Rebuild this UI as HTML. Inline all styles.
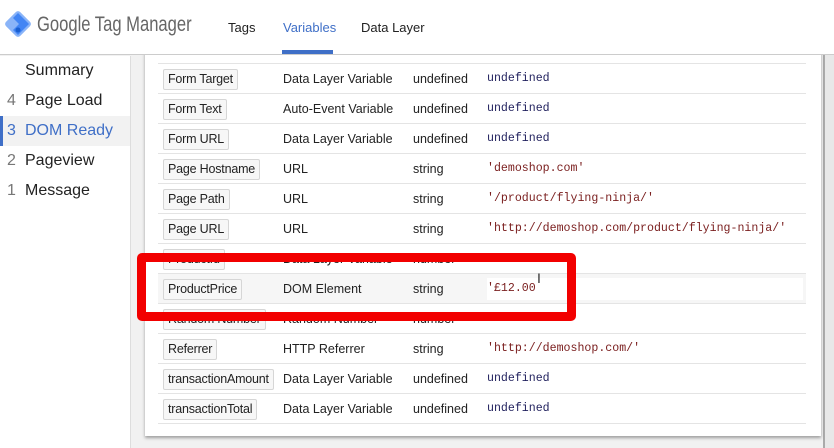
<!DOCTYPE html>
<html><head><style>
*{margin:0;padding:0;box-sizing:border-box}
body{width:834px;height:448px;overflow:hidden;background:#f1f1f1;font-family:"Liberation Sans",Arial,sans-serif;position:relative}
.hdr{position:absolute;left:0;top:0;width:834px;height:55px;background:#fff;border-bottom:1px solid #ccc;z-index:5}
.side{position:absolute;left:0;top:56px;width:131px;height:392px;background:#fff;border-right:1px solid #ddd}
.side div{height:30px;line-height:30px;font-size:16px;color:#222;padding-left:7px;position:relative}
.side span{color:#777;display:inline-block;width:18px}
.side .act{background:#f2f2f2;color:#3f6fc7}
.side .act:before{content:"";position:absolute;left:0;top:0;width:3px;height:30px;background:#3f6fc7}
.card{position:absolute;left:145px;top:31px;width:676px;height:405px;background:#fff;box-shadow:0 2px 3px rgba(0,0,0,.35)}
.row{position:absolute;left:13px;width:648px;height:30px;border-bottom:1px solid #e4e4e4;font-size:12.5px;color:#222;white-space:nowrap}
.row>*{position:absolute;top:0;line-height:30px}
.b{left:5px;top:5px!important;height:21px;line-height:19px!important;padding:0 4px;border:1px solid #d6d6d6;background:#f7f7f7;border-radius:2px;letter-spacing:-0.2px}
.t{left:125px}.d{left:255px}.v{left:329px;font-family:"Liberation Mono",monospace;font-size:11.6px}
.u{color:#1f1f5c}.s{color:#7b2020}
</style></head><body>
<div class="hdr">
<svg style="position:absolute;left:4px;top:10px" width="28" height="28" viewBox="0 0 28 28"><rect x="4" y="4" width="20" height="20" transform="rotate(45 14 14)" rx="3" fill="#8ab4f8"/><path d="M14 3 L25 14 L14 25 L9 20 L15 14 L9 8Z" fill="#4285f4"/><circle cx="14" cy="20" r="2.5" fill="#1a5fd0"/></svg>
<div style="position:absolute;left:37px;top:13px;font-size:21px;color:#666;transform:scaleX(0.79);transform-origin:0 0;white-space:nowrap">Google Tag Manager</div>
<div style="position:absolute;left:228px;top:20px;font-size:13px;color:#222">Tags</div>
<div style="position:absolute;left:283px;top:20px;font-size:13px;color:#3f6fc7">Variables</div>
<div style="position:absolute;left:282px;top:50px;width:51px;height:4px;background:#3f6fc7"></div>
<div style="position:absolute;left:361px;top:20px;font-size:13px;color:#222">Data Layer</div>
</div>
<div class="side">
<div style="padding-left:25px">Summary</div>
<div><span>4</span>Page Load</div>
<div class="act"><span style="color:#3f6fc7">3</span>DOM Ready</div>
<div><span>2</span>Pageview</div>
<div><span>1</span>Message</div>
</div>
<div style="position:absolute;left:823px;top:55px;width:11px;height:393px;background:#e8e8e8;border-left:2px solid #aaa"></div>
<div class="card">
<div class="row" style="top:3px"><div class="b" style="top:-4px!important">&nbsp;&nbsp;&nbsp;&nbsp;&nbsp;&nbsp;&nbsp;&nbsp;&nbsp;&nbsp;&nbsp;&nbsp;&nbsp;</div></div>
<div class="row" style="top:33px"><div class="b">Form Target</div><div class="t">Data Layer Variable</div><div class="d">undefined</div><div class="v u">undefined</div></div>
<div class="row" style="top:63px"><div class="b">Form Text</div><div class="t">Auto-Event Variable</div><div class="d">undefined</div><div class="v u">undefined</div></div>
<div class="row" style="top:93px"><div class="b">Form URL</div><div class="t">Data Layer Variable</div><div class="d">undefined</div><div class="v u">undefined</div></div>
<div class="row" style="top:123px"><div class="b">Page Hostname</div><div class="t">URL</div><div class="d">string</div><div class="v s">'demoshop.com'</div></div>
<div class="row" style="top:153px"><div class="b">Page Path</div><div class="t">URL</div><div class="d">string</div><div class="v s">'/product/flying-ninja/'</div></div>
<div class="row" style="top:183px"><div class="b">Page URL</div><div class="t">URL</div><div class="d">string</div><div class="v s">'http://demoshop.com/product/flying-ninja/'</div></div>
<div class="row" style="top:213px"><div class="b">ProductId</div><div class="t">Data Layer Variable</div><div class="d">number</div><div class="v s">21</div></div>
<div class="row" style="top:243px;background:#f6f6f6"><div class="b">ProductPrice</div><div class="t">DOM Element</div><div class="d">string</div><div class="v s" style="background:#fff;width:316px;top:4px;line-height:22px">'£12.00</div></div>
<div class="row" style="top:273px"><div class="b">Random Number</div><div class="t">Random Number</div><div class="d">number</div><div class="v s">1234567</div></div>
<div class="row" style="top:303px"><div class="b">Referrer</div><div class="t">HTTP Referrer</div><div class="d">string</div><div class="v s">'http://demoshop.com/'</div></div>
<div class="row" style="top:333px"><div class="b">transactionAmount</div><div class="t">Data Layer Variable</div><div class="d">undefined</div><div class="v u">undefined</div></div>
<div class="row" style="top:363px"><div class="b">transactionTotal</div><div class="t">Data Layer Variable</div><div class="d">undefined</div><div class="v u">undefined</div></div>
</div>
<div style="position:absolute;left:137px;top:253px;width:439px;height:68px;border:9px solid #f20000;border-radius:5px;z-index:6"></div>
<div style="position:absolute;left:537px;top:270px;font-size:14px;color:#333;z-index:7">I</div>
</body></html>
